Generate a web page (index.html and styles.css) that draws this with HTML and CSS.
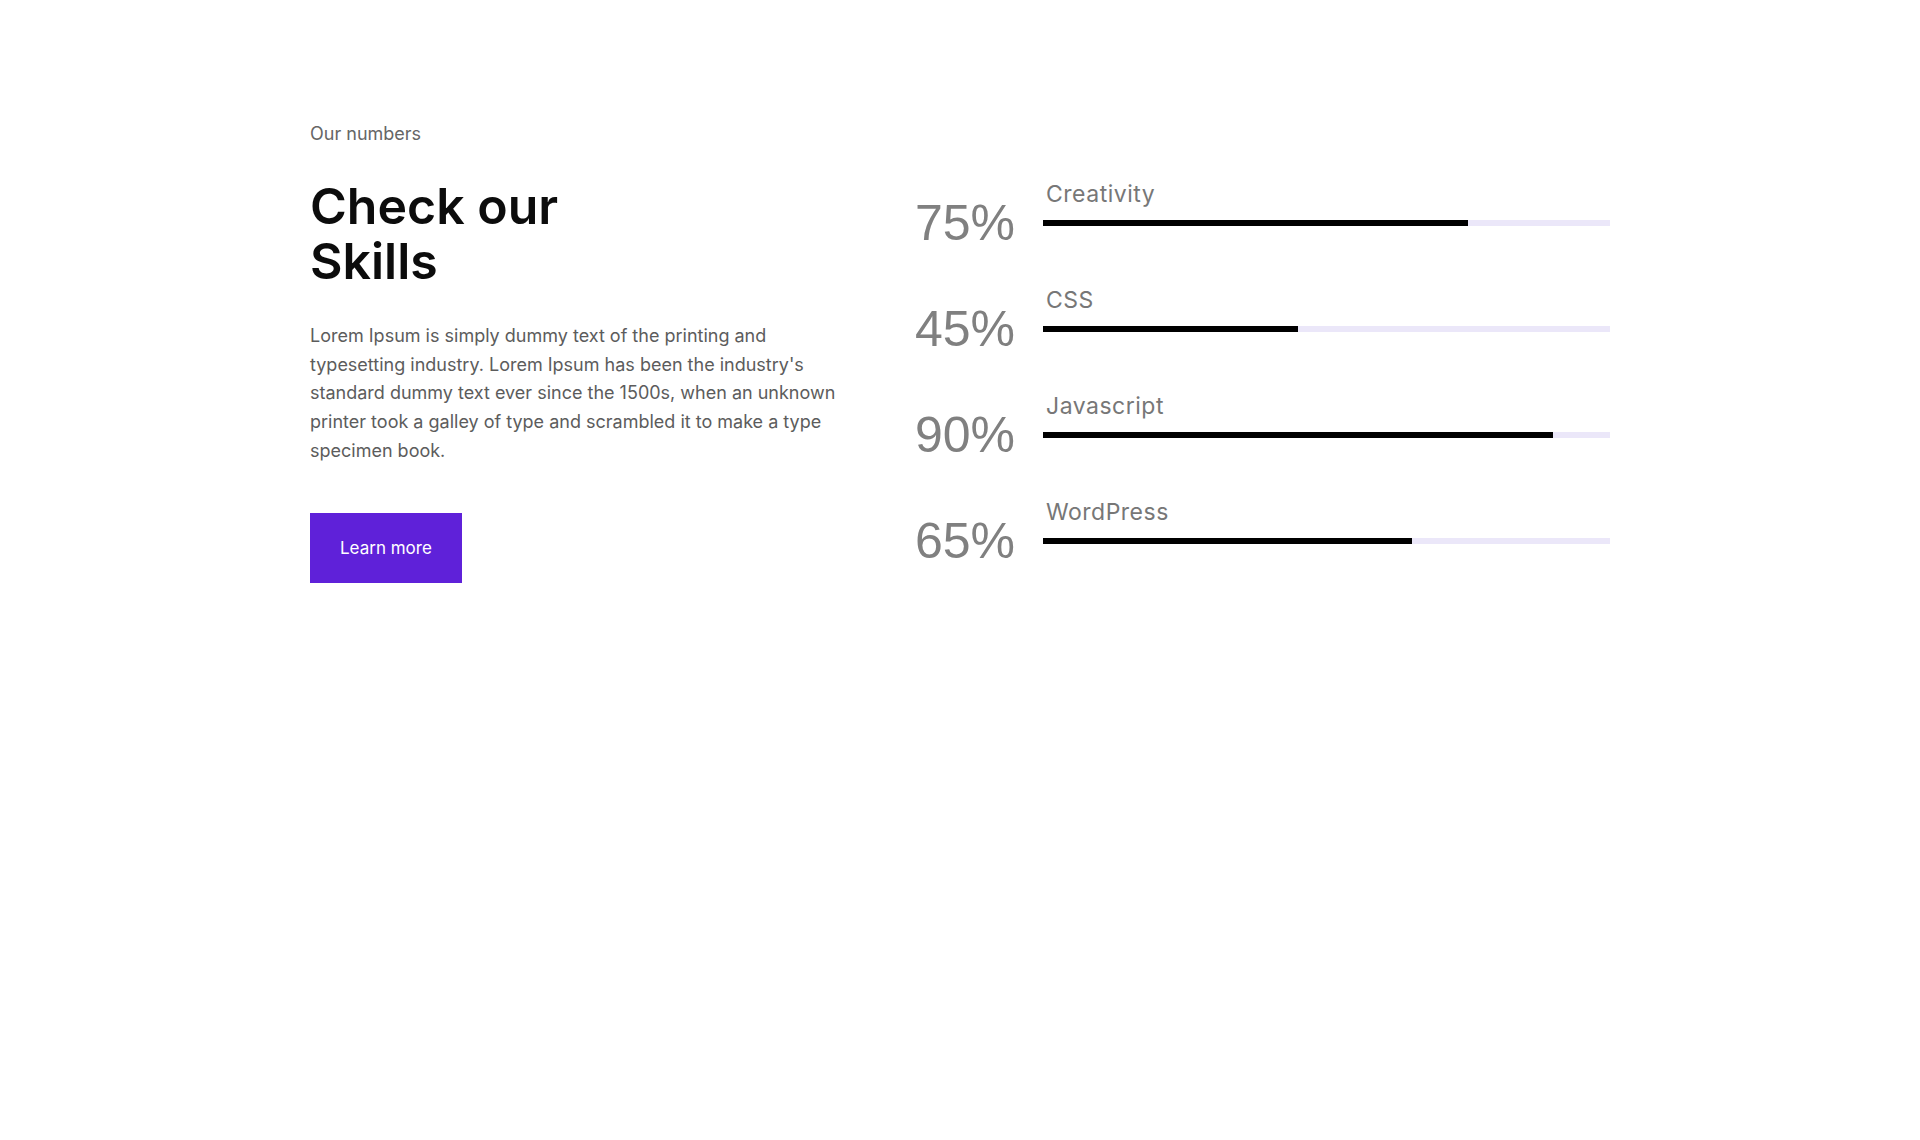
FILE: index.html
```html
<!DOCTYPE html>
<html lang="en">
<head>
<meta charset="utf-8">
<title>Check our Skills</title>
<link rel="stylesheet" href="styles.css">
</head>
<body>
<section class="skills-section">
  <div class="container">
    <div class="intro">
      <p class="eyebrow">Our numbers</p>
      <h2 class="title">Check our<br>Skills</h2>
      <p class="text">Lorem Ipsum is simply dummy text of the printing and typesetting industry. Lorem Ipsum has been the industry's standard dummy text ever since the 1500s, when an unknown printer took a galley of type and scrambled it to make a type specimen book.</p>
      <a class="btn" href="#">Learn more</a>
    </div>
    <div class="skills">
      <div class="skill">
        <span class="skill-label">Creativity</span>
        <span class="skill-value">75%</span>
        <div class="skill-track"><div class="skill-fill" style="width:75%"></div></div>
      </div>
      <div class="skill">
        <span class="skill-label">CSS</span>
        <span class="skill-value">45%</span>
        <div class="skill-track"><div class="skill-fill" style="width:45%"></div></div>
      </div>
      <div class="skill">
        <span class="skill-label">Javascript</span>
        <span class="skill-value">90%</span>
        <div class="skill-track"><div class="skill-fill" style="width:90%"></div></div>
      </div>
      <div class="skill">
        <span class="skill-label">WordPress</span>
        <span class="skill-value">65%</span>
        <div class="skill-track"><div class="skill-fill" style="width:65%"></div></div>
      </div>
    </div>
  </div>
</section>
</body>
</html>
```

FILE: styles.css
```css
* {
  box-sizing: border-box;
}

html, body {
  margin: 0;
  padding: 0;
  background: #ffffff;
}

body {
  font-family: Inter, "Noto Sans", Arial, sans-serif;
  color: #5a5a5a;
}

.skills-section {
  padding-top: 120px;
  min-height: 1140px;
}

.container {
  width: 1300px;
  margin: 0 auto;
  display: flex;
  align-items: flex-start;
}

.intro {
  flex: 0 0 605px;
}

.eyebrow {
  margin: 0;
  font-size: 18px;
  line-height: 28.8px;
  color: #666666;
}

.title {
  margin: 30px 0 0;
  font-size: 50px;
  line-height: 55px;
  font-weight: 600;
  color: #0c0c0c;
  letter-spacing: 0;
}

.text {
  margin: 33px 0 0;
  max-width: 540px;
  font-size: 18px;
  letter-spacing: 0;
  line-height: 28.8px;
  color: #5c5c5c;
}

.btn {
  display: inline-block;
  margin-top: 47px;
  height: 70px;
  padding: 0 30px;
  line-height: 70px;
  background: #5f21d9;
  color: #ffffff;
  font-size: 17px;
  text-decoration: none;
}

.skills {
  flex: 1 1 auto;
  padding-top: 63px;
  display: flex;
  flex-direction: column;
  gap: 48px;
}

.skill {
  display: grid;
  grid-template-columns: 128px 1fr;
  grid-template-rows: 22px 36px;
}

.skill-label {
  grid-column: 2;
  grid-row: 1;
  padding-left: 3px;
  font-size: 23px;
  letter-spacing: 0.5px;
  line-height: 22px;
  color: #777777;
}

.skill-value {
  grid-column: 1;
  grid-row: 2;
  font-family: "Liberation Sans", Arial, sans-serif;
  font-size: 50px;
  line-height: 36px;
  color: #808080;
  white-space: nowrap;
}

.skill-track {
  grid-column: 2;
  grid-row: 2;
  align-self: center;
  height: 6px;
  background: #ebe7f9;
}

.skill-fill {
  height: 100%;
  background: #000000;
}
```
